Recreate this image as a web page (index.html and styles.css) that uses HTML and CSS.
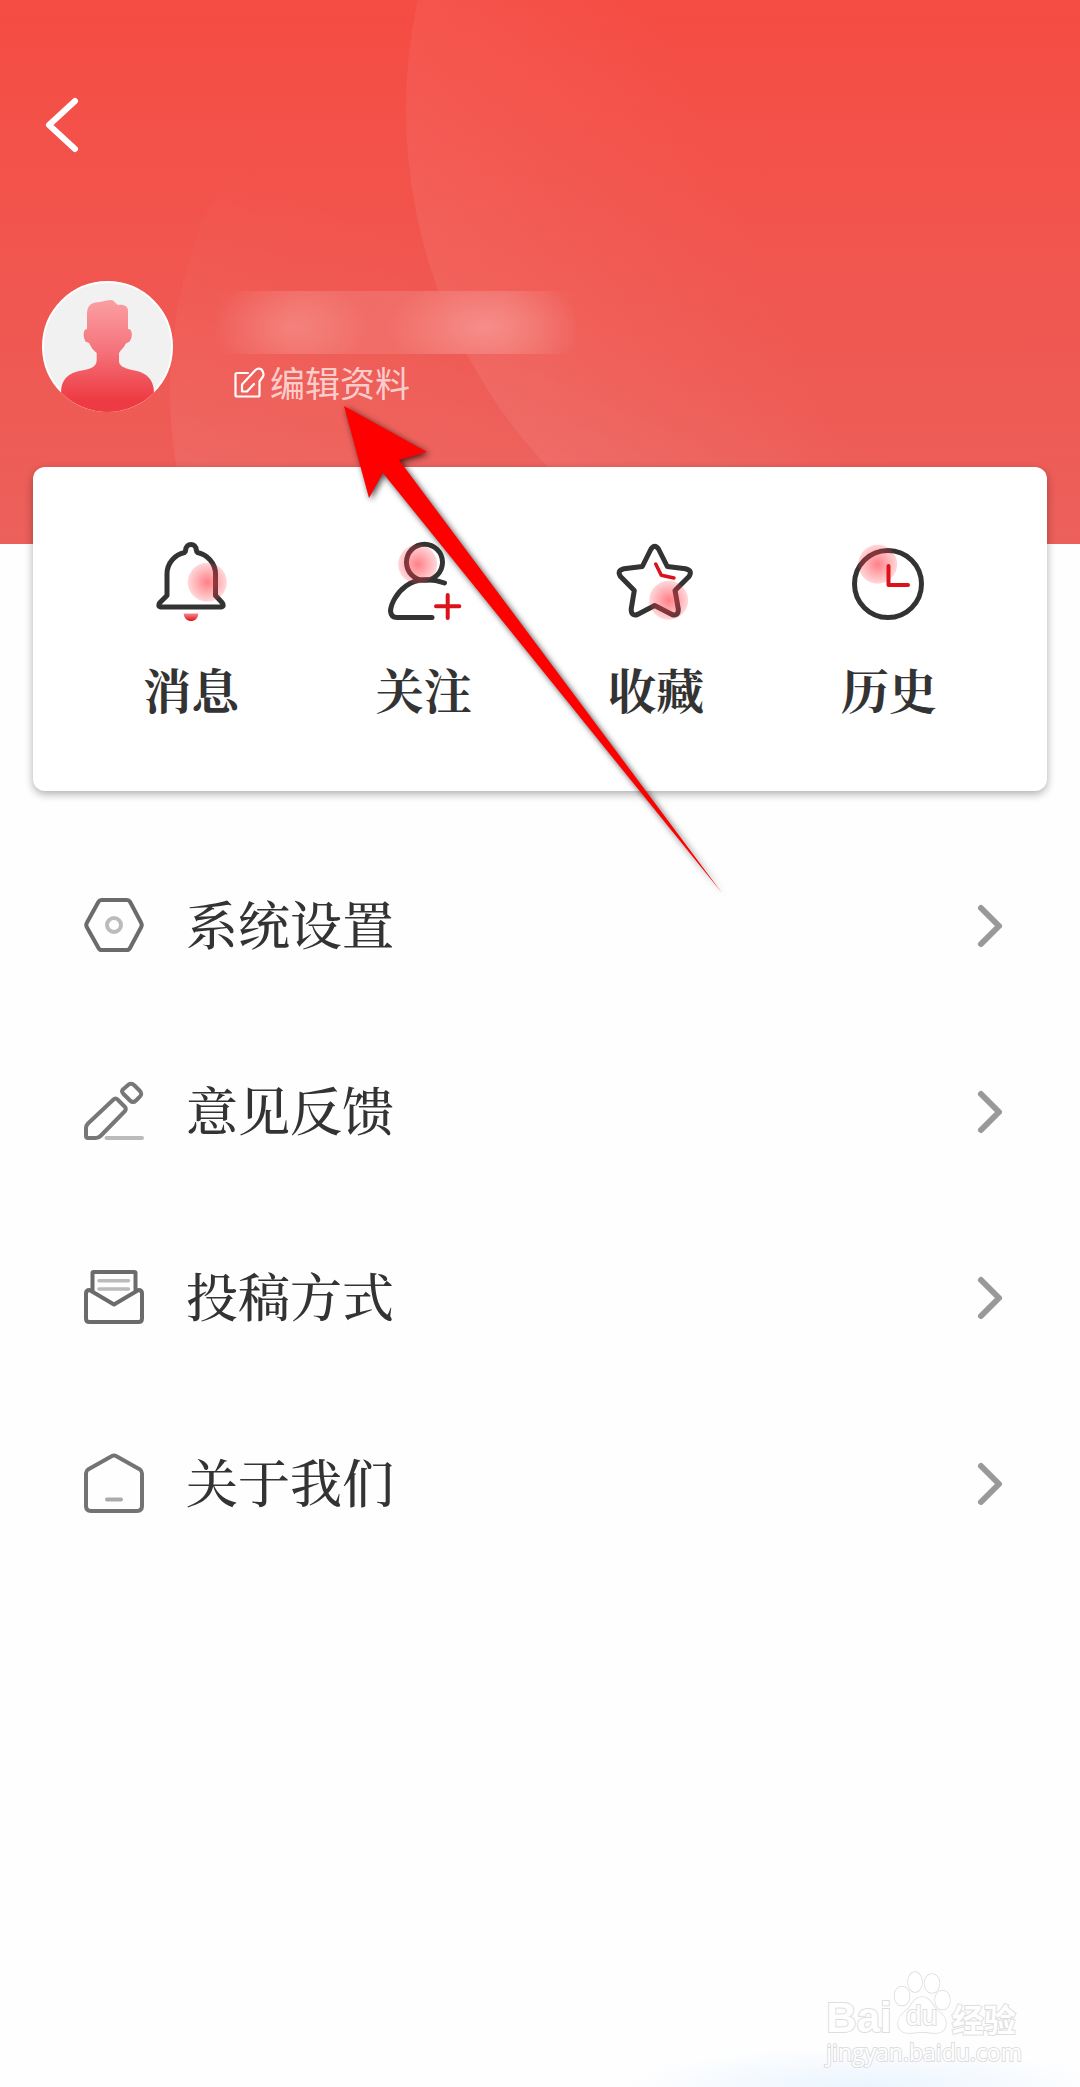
FILE: index.html
```html
<!DOCTYPE html>
<html lang="zh-CN">
<head>
    <meta charset="UTF-8">
    <meta name="viewport" content="width=device-width, initial-scale=1">
    <title>个人中心</title>
    <link rel="stylesheet" href="styles.css">
</head>
<body>
<div class="page">
    <header class="header">
        <svg class="header-bg" width="1080" height="544" viewBox="0 0 1080 544" aria-hidden="true">
            <defs>
                <linearGradient id="ring-left" gradientUnits="userSpaceOnUse" x1="190" y1="460" x2="310" y2="190">
                    <stop offset="0" stop-color="#fff" stop-opacity=".06"/>
                    <stop offset="1" stop-color="#fff" stop-opacity="0"/>
                </linearGradient>
                <linearGradient id="ring-right" gradientUnits="userSpaceOnUse" x1="440" y1="320" x2="740" y2="190">
                    <stop offset="0" stop-color="#fff" stop-opacity=".07"/>
                    <stop offset="1" stop-color="#fff" stop-opacity="0"/>
                </linearGradient>
            </defs>
            <circle cx="617" cy="390" r="447" fill="url(#ring-left)"/>
            <circle cx="926" cy="110" r="520" fill="url(#ring-right)"/>
        </svg>
        <a class="back" href="#" aria-label="返回">
            <svg width="32" height="54" viewBox="0 0 32 54">
                <path d="M29 3L3 27l26 24" fill="none" stroke="#fff" stroke-width="6" stroke-linecap="round" stroke-linejoin="round"/>
            </svg>
        </a>
        <div class="profile">
            <svg class="avatar" width="131" height="131" viewBox="0 0 131 131" aria-hidden="true">
                <defs>
                    <linearGradient id="person" x1="0" y1="0" x2="0" y2="1">
                        <stop offset="0" stop-color="#fb9fa3"/>
                        <stop offset=".45" stop-color="#f5737b"/>
                        <stop offset=".9" stop-color="#ee3a42"/>
                    </linearGradient>
                    <clipPath id="avatar-clip"><circle cx="65.500" cy="65.500" r="65.500"/></clipPath>
                </defs>
                <circle cx="65.500" cy="65.500" r="64.500" fill="#f1f1f1" stroke="#fff" stroke-width="2"/>
                <path clip-path="url(#avatar-clip)" fill="url(#person)" d="M45 48V34C45 27 47 23 53 21.500C60 21 65 19 69 19C72 19 73 22 76 24C82 23 86 25 86 30V48C91 48 90.500 56 88 60C87 62 84 61 83 64C81 68 77 70 77 73V80C77 85 82 87 90 89C103 91 112 97 112 112V131H19V112C19 98 26 92 40 89.500C50 88 54.700 85 54.700 79V72C51 69 49 66 47 62C46 61 44 62 43 59.500C41 55 41 48 45 48Z"/>
            </svg>
            <div class="profile-info">
                <div class="nickname"></div>
                <a class="edit" href="#">
                    <svg width="31" height="31" viewBox="0 0 31 31" fill="none" stroke="#fff" stroke-width="2.200" stroke-linecap="round" stroke-linejoin="round">
                        <path d="M14 6H3Q1.500 6 1.500 7.500V28Q1.500 29.500 3 29.500H24Q25.500 29.500 25.500 28V14.500L29 9.500Q30.500 6 27.500 2.500Q24 .5 21.500 3L8 17.500V24.500H13L20 17"/>
                    </svg>
                    <span>编辑资料</span>
                </a>
            </div>
        </div>
    </header>

    <main>
        <nav class="card">
            <a class="shortcut" href="#">
                <svg width="84" height="84" viewBox="0 0 84 84" fill="none" stroke="#333" stroke-width="5" stroke-linecap="round" stroke-linejoin="round">
                    <defs>
                        <radialGradient id="glow">
                            <stop offset="0" stop-color="#ff3b46" stop-opacity=".65"/>
                            <stop offset="1" stop-color="#ff3b46" stop-opacity=".2"/>
                        </radialGradient>
                        <linearGradient id="clapper" x1="0" y1="0" x2="0" y2="1">
                            <stop offset="0" stop-color="#f5898d"/>
                            <stop offset="1" stop-color="#dd1119"/>
                        </linearGradient>
                    </defs>
                    <path d="M12 67Q8 66 11 62.500L18 55.500V34C18 23 26 14.500 35.500 12.500Q36.500 12 36.700 10C37 2.500 47 2.500 47.300 10Q47.500 12 48.500 12.500C58 14.500 66.500 23 66.500 34V55.500L73 62.500Q76 66 72 67Z"/>
                    <circle cx="58.300" cy="42.300" r="19.500" fill="url(#glow)" stroke="none"/>
                    <path d="M34.700 73.500H49.300C49 83.500 35 83.500 34.700 73.500Z" fill="url(#clapper)" stroke="none"/>
                </svg>
                <span>消息</span>
            </a>
            <a class="shortcut" href="#">
                <svg width="84" height="84" viewBox="0 0 84 84" fill="none" stroke="#333" stroke-width="5" stroke-linecap="round" stroke-linejoin="round">
                    <circle cx="42.500" cy="22.300" r="18"/>
                    <path d="M62.500 43C49 38 34 38.500 24 46C15 52.500 9 63 8.500 71Q9 77.500 15 77.500H50"/>
                    <path d="M54 66.300H77.300M65.700 55V78" stroke="#dd1119" stroke-width="4"/>
                    <circle cx="35.700" cy="24.300" r="19.500" fill="url(#glow)" stroke="none"/>
                </svg>
                <span>关注</span>
            </a>
            <a class="shortcut" href="#">
                <svg width="84" height="84" viewBox="0 0 84 84" fill="none" stroke="#333" stroke-width="5" stroke-linecap="round" stroke-linejoin="round">
                    <path d="M37 9Q40.700 3.500 44.500 9L53.300 26.500L71.500 28.700Q79 30.500 75 36.500L61 50.500L64.300 69Q64.500 76.500 58 74.500L40.700 65.500L23.500 74.500Q17 76.500 17.200 69L20.300 50.500L6.500 36.500Q2.500 30.500 10 28.700L28.300 26.500Z"/>
                    <path d="M41.700 24L47.300 35.300L60 38" stroke="#dd1119" stroke-width="3.500"/>
                    <circle cx="54.700" cy="60.300" r="19.500" fill="url(#glow)" stroke="none"/>
                </svg>
                <span>收藏</span>
            </a>
            <a class="shortcut" href="#">
                <svg width="84" height="84" viewBox="0 0 84 84" fill="none" stroke="#333" stroke-width="5" stroke-linecap="round" stroke-linejoin="round">
                    <circle cx="41" cy="44" r="33.500"/>
                    <circle cx="30.700" cy="24.300" r="19.500" fill="url(#glow)" stroke="none"/>
                    <path d="M41.500 26V45H61" stroke="#dd1119" stroke-width="4"/>
                </svg>
                <span>历史</span>
            </a>
        </nav>

        <ul class="menu">
            <li>
                <a class="menu-item" href="#">
                    <svg width="60" height="60" viewBox="0 0 60 60" fill="none" stroke="#6b6b6b" stroke-width="4" stroke-linecap="round" stroke-linejoin="round">
                        <path d="M17.500 4H43Q45 4 46 5.700L57 26.500Q58.500 29 57 31.500L46 52Q45 54 43 54H17.500Q15.500 54 14.500 52L3 31.500Q1.500 29 3 26.500L14.500 5.700Q15.500 4 17.500 4Z"/>
                        <circle cx="30" cy="29" r="7" stroke="#bbb"/>
                    </svg>
                    <span class="menu-label">系统设置</span>
                    <svg width="24" height="42" viewBox="0 0 24 42"><path class="chevron" d="M3 3l18 18L3 39"/></svg>
                </a>
            </li>
            <li>
                <a class="menu-item" href="#">
                    <svg width="60" height="60" viewBox="0 0 60 60" fill="none" stroke="#777" stroke-width="4" stroke-linecap="round" stroke-linejoin="round">
                        <path d="M22.500 56H58" stroke="#bbb"/>
                        <path d="M29.500 17.500Q31.500 15.500 33.500 17.500L41 25Q42.500 27 41 29L17 53.500Q14.500 56 12 56H4Q2 56 2 54V46Q2 43.500 4 41.500Z"/>
                        <path d="M43.500 3.500Q47 0 50.500 3.500L55.500 8.500Q59 12 55.500 15L52 18.500Q49 21.500 46 18.500L39.500 12Q36.500 9 39.500 7Z"/>
                    </svg>
                    <span class="menu-label">意见反馈</span>
                    <svg width="24" height="42" viewBox="0 0 24 42"><path class="chevron" d="M3 3l18 18L3 39"/></svg>
                </a>
            </li>
            <li>
                <a class="menu-item" href="#">
                    <svg width="60" height="60" viewBox="0 0 60 60" fill="none" stroke="#6b6b6b" stroke-width="4" stroke-linecap="round" stroke-linejoin="round">
                        <path d="M15 12.700H44.500M15 21H44.500" stroke="#bbb" stroke-width="3.500"/>
                        <path d="M8.500 22V5Q8.500 4 9.500 4H50.500Q51.500 4 51.500 5V22"/>
                        <path d="M5.500 22L30 36.500L54.500 22Q58 22 58 25.500V50.500Q58 54 54.500 54H5.500Q2 54 2 50.500V25.500Q2 22 5.500 22Z"/>
                    </svg>
                    <span class="menu-label">投稿方式</span>
                    <svg width="24" height="42" viewBox="0 0 24 42"><path class="chevron" d="M3 3l18 18L3 39"/></svg>
                </a>
            </li>
            <li>
                <a class="menu-item" href="#">
                    <svg width="60" height="60" viewBox="0 0 60 60" fill="none" stroke="#737376" stroke-width="4" stroke-linecap="round" stroke-linejoin="round">
                        <path d="M28 2Q30 .8 32 2L56 15.500Q58 17 58 19.500V52Q58 57 53 57H7Q2 57 2 52V19.500Q2 17 4 15.500Z"/>
                        <path d="M23 45.500H37" stroke="#aaa"/>
                    </svg>
                    <span class="menu-label">关于我们</span>
                    <svg width="24" height="42" viewBox="0 0 24 42"><path class="chevron" d="M3 3l18 18L3 39"/></svg>
                </a>
            </li>
        </ul>
    </main>

    <footer class="footer">
        <div class="watermark">
            <div class="logo">
                <span class="logo-bai">Bai</span>
                <span class="logo-paw">
                    <svg width="58" height="64" viewBox="0 0 58 64" fill="#fff" stroke="#dcdcdc" stroke-width="1.500" aria-hidden="true">
                        <ellipse cx="9" cy="25" rx="7.500" ry="9.500"/>
                        <ellipse cx="22" cy="11" rx="7" ry="10"/>
                        <ellipse cx="39" cy="12.500" rx="7.500" ry="9.500"/>
                        <ellipse cx="49.500" cy="29" rx="7.500" ry="9.500"/>
                        <path d="M29 26C36 26 39 33 42 37C46 41 53 45 53 52C53 59 48 62 43 62C37 62 34 61 29 61C24 61 21 62 16 62C10 62 5 59 5 52C5 45 12 41 16 37C19 33 22 26 29 26Z"/>
                    </svg>
                    <span class="logo-du">du</span>
                </span>
                <span class="logo-name">经验</span>
            </div>
            <div class="logo-url">jingyan.baidu.com</div>
        </div>
    </footer>

    <svg class="pointer" width="400" height="510" viewBox="0 0 400 510" aria-hidden="true">
        <path d="M4 6L87 52L59 60L382 493L43 73L29 98Z" fill="red"/>
    </svg>
</div>
</body>
</html>
```

FILE: styles.css
```css
* {
    box-sizing: border-box;
}

body {
    background: #fefefe;
    color: #333;
    font-family: "Noto Serif CJK SC", "Noto Sans CJK SC", serif;
    margin: 0;
}

a {
    color: inherit;
    text-decoration: none;
}

svg {
    display: block;
    flex: none;
    overflow: visible;
}

.page {
    display: flex;
    flex-direction: column;
    min-height: 100vh;
    overflow: hidden;
    position: relative;
}

/* header */

.header {
    background: linear-gradient(#f54c43, #ec605b);
    overflow: hidden;
    padding: 98px 42px 132px;
    position: relative;
}

.header-bg {
    left: 0;
    position: absolute;
    top: 0;
}

.back {
    display: block;
    margin-left: 4px;
    position: relative;
    width: 32px;
}

.profile {
    display: flex;
    gap: 42px;
    margin-top: 129px;
    position: relative;
}

.profile-info {
    padding-top: 10px;
}

/* blurred out name */
.nickname {
    background:
        radial-gradient(ellipse 80px 48px at 76px 36px, rgba(255, 190, 190, .28), transparent),
        radial-gradient(ellipse 100px 52px at 270px 36px, rgba(255, 190, 190, .38), transparent),
        linear-gradient(90deg, transparent, rgba(241, 110, 104, .9) 25%, rgba(241, 112, 106, .9) 80%, transparent);
    height: 63px;
    width: 360px;
}

.edit {
    align-items: center;
    color: rgba(255, 255, 255, .7);
    display: flex;
    font-family: "Noto Sans CJK SC", sans-serif;
    font-size: 35px;
    gap: 5px;
    line-height: 40px;
    margin: 8px 0 0 19px;
}

/* shortcuts */

.card {
    background: #fff;
    border-radius: 12px;
    box-shadow: 0 3px 8px rgba(0, 0, 0, .32);
    display: grid;
    grid-template-columns: repeat(4, 1fr);
    margin: -77px 33px 0;
    padding: 73px 42px 78px;
    position: relative;
}

.shortcut {
    align-items: center;
    display: flex;
    flex-direction: column;
    font-size: 48px;
    font-weight: bold;
    gap: 41px;
    line-height: 48px;
}

/* menu */

.menu {
    list-style: none;
    margin: 42px 0 0;
    padding: 0 78px 0 84px;
}

.menu-item {
    align-items: center;
    display: flex;
    gap: 42px;
    height: 186px;
}

.menu-label {
    flex: 1;
    font-size: 52px;
    font-weight: 500;
    line-height: 60px;
    padding-bottom: 6px;
}

.chevron {
    fill: none;
    stroke: #999;
    stroke-linecap: round;
    stroke-linejoin: round;
    stroke-width: 6;
}

/* watermark */

.footer {
    background: radial-gradient(ellipse 240px 40px at 80% 100%, #eaf4fe, transparent);
    display: flex;
    justify-content: flex-end;
    margin-top: auto;
    padding: 0 58px 22px 0;
}

.watermark {
    -webkit-text-stroke: 2px #dedede;
    color: #fff;
    font-family: "Open Sans", sans-serif;
    paint-order: stroke fill;
}

.logo {
    align-items: flex-end;
    display: flex;
    gap: 1px;
    line-height: 34px;
    margin-bottom: 4px;
}

.logo-bai {
    font-family: "Liberation Sans", sans-serif;
    font-size: 42px;
    font-weight: bold;
}

.logo-paw {
    position: relative;
}

.logo-du {
    bottom: 2px;
    font-family: "Liberation Sans", sans-serif;
    font-size: 28px;
    left: 0;
    position: absolute;
    right: 0;
    text-align: center;
}

.logo-name {
    font-family: "Noto Sans CJK SC", sans-serif;
    font-size: 32px;
    font-weight: bold;
}

.logo-url {
    font-size: 23px;
    line-height: 26px;
}

/* arrow over the page, pointing at the edit link */

.pointer {
    filter: drop-shadow(2px 2px 3px rgba(0, 0, 0, .7));
    left: 340px;
    position: absolute;
    top: 400px;
}
```
